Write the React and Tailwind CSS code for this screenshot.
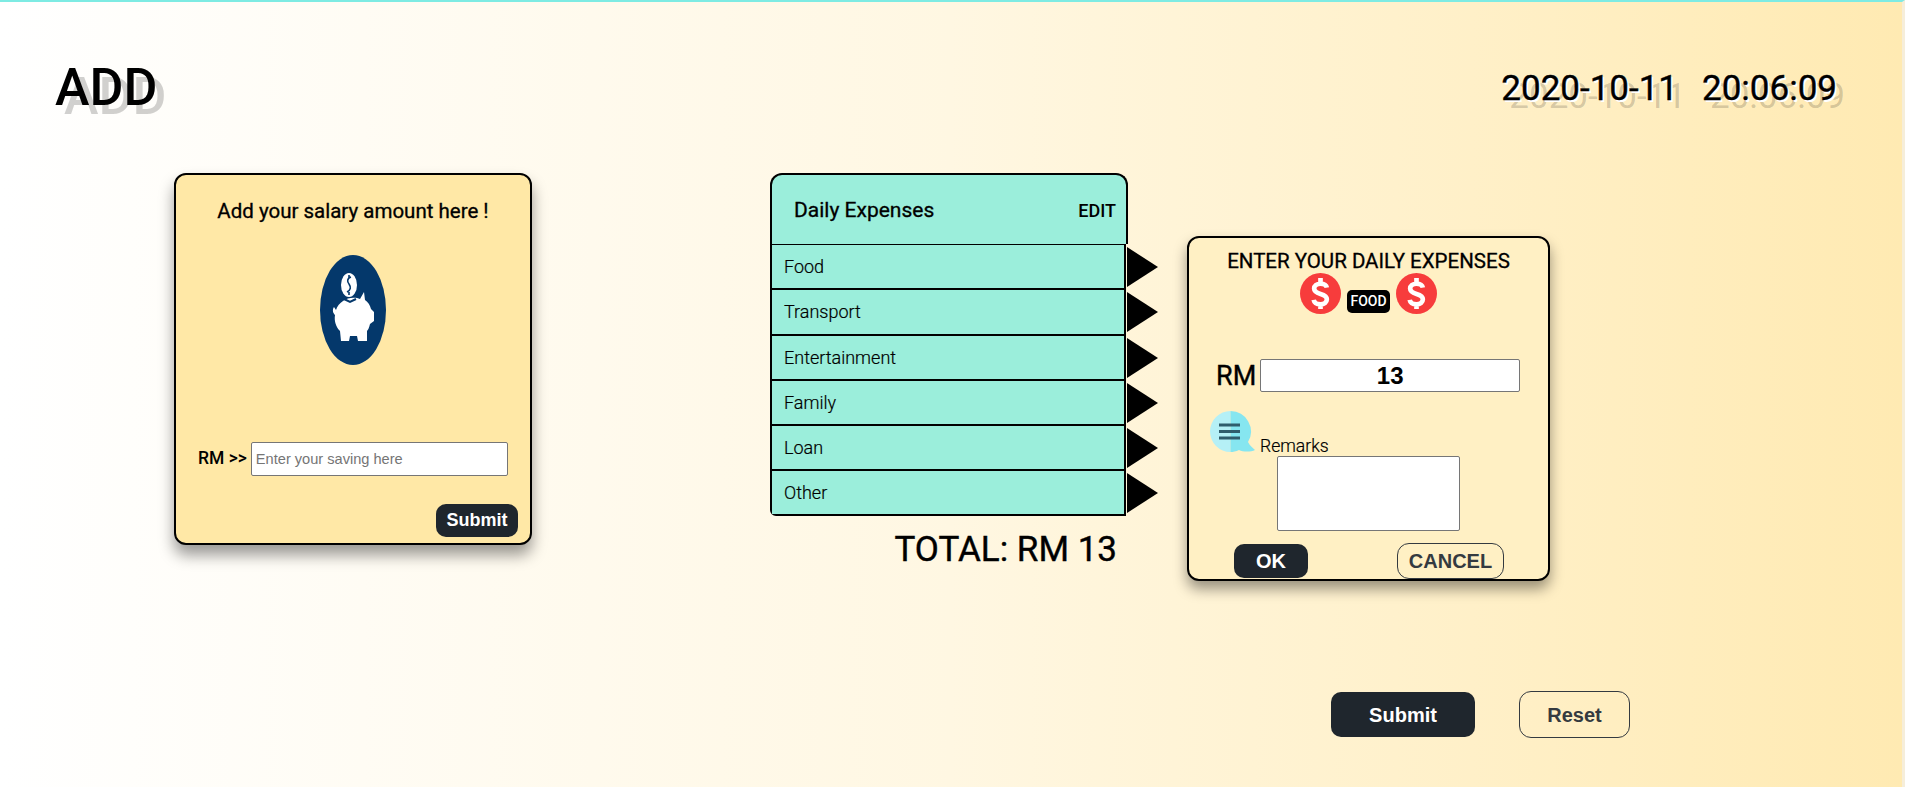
import React from "react";

const CATEGORIES = ["Food", "Transport", "Entertainment", "Family", "Loan", "Other"];

function PiggyIcon() {
  return (
    <svg width="66" height="110" viewBox="0 0 66 110" className="block">
      <ellipse cx="33" cy="55" rx="33" ry="55" fill="#04386b" />
      <ellipse cx="29" cy="30" rx="8" ry="12" fill="#fff" />
      <path d="M31 22 C27 23 27 27 29 29 C31 32 31 35 27 37 M29 20 V23 M29 37 V40" fill="none" stroke="#04386b" strokeWidth="1.6" />
      <path
        d="M23 46 C28 42 36 42 40 44 L44 37 L45 45 C48 47 50 50 51 54 L54 57 L54 66 L50 69 C49 73 48 75 47 76 L47 86 L38 86 L37 81 L30 81 L29 86 L21 86 L20 76 C16 72 14 66 15 60 C13 58 12 55 14 52 L16 55 C17 51 20 48 23 46 Z"
        fill="#fff"
      />
      <path d="M24 44 L30 47 L36 44" fill="none" stroke="#04386b" strokeWidth="2" />
    </svg>
  );
}

function CoinIcon() {
  return (
    <svg width="41" height="41" viewBox="0 0 42 42" className="block">
      <circle cx="21" cy="21" r="21" fill="#f73c3c" />
      <path
        d="M27.500 15 C27 12.500 24.500 11 21 11 C17 11 14.500 13 14.500 16 C14.500 19.500 17.500 20.500 21 21.500 C24.500 22.500 27.500 23.500 27.500 27 C27.500 30 25 32 21 32 C17 32 14.500 30 14 27.500 M21 5 V11 M21 32 V37"
        fill="none"
        stroke="#fff"
        strokeWidth="4.800"
      />
    </svg>
  );
}

function BubbleIcon() {
  return (
    <svg width="46" height="42" viewBox="0 0 46 42" className="block">
      <path d="M20.500 0 A20.500 20.500 0 0 0 20.500 41 Z" fill="#b5f0f6" />
      <path d="M20.500 0 A20.500 20.500 0 0 1 38 31 C40 35 43 37 45 39 C41 41 33 41 29 39 C26 40.500 23 41 20.500 41 Z" fill="#86e6f0" />
      <path d="M9 14 H30 M9 20.500 H30 M9 27 H30" stroke="#2f5d6c" strokeWidth="3" />
    </svg>
  );
}

export default function App() {
  return (
    <div className="h-[787px] overflow-hidden border-t-2 border-r-[3px] border-t-[#7eebe3] border-r-[#f6eeda] bg-linear-to-r from-white via-[#fff7e2] to-[#ffeab2] font-[Roboto,sans-serif] text-black">
      {/* Header */}
      <div className="flex h-[171px] items-center justify-between pl-[55px] pr-[65px]">
        <h1 className="text-[52px] font-medium [text-shadow:9px_9px_0_rgba(0,0,0,0.18)]">ADD</h1>
        <div className="mt-[4px] flex gap-[24px] text-[35px] [-webkit-text-stroke:0.4px_black] [text-shadow:2px_2px_0_#fff,8px_8px_0_rgba(0,0,0,0.18)]">
          <span>2020-10-11</span>
          <span>20:06:09</span>
        </div>
      </div>

      <div className="flex items-start pl-[174px]">
        {/* Salary card */}
        <div className="h-[372px] w-[358px] rounded-xl border-2 border-black bg-[#ffe8a6] shadow-[0_10px_15px_rgba(0,0,0,0.4)]">
          <p className="mt-[24px] text-center text-[20.500px] leading-[24px] [-webkit-text-stroke:0.3px_black]">Add your salary amount here !</p>
          <div className="mt-[32px] flex justify-center">
            <PiggyIcon />
          </div>
          <div className="mt-[77px] flex items-center pl-[22px]">
            <span className="mb-[2px] mr-[4px] text-[17.500px] font-medium">RM &gt;&gt;</span>
            <input
              type="text"
              placeholder="Enter your saving here"
              className="h-[34px] w-[257px] rounded-[2px] border border-[#767676] bg-white px-[4px] font-['Liberation_Sans',Arial,sans-serif] text-[14.600px] placeholder:text-[#757575]"
            />
          </div>
          <div className="mt-[28px] flex justify-end pr-[12px]">
            <button className="h-[33px] w-[82px] rounded-[10px] bg-[#1f262d] font-['Liberation_Sans',Arial,sans-serif] text-[18px] font-bold text-white">
              Submit
            </button>
          </div>
        </div>

        {/* Expense list */}
        <div className="ml-[238px] w-[358px]">
          <div className="flex h-[71px] items-center justify-between rounded-t-xl border-x-2 border-t-2 border-black bg-[#9beedb] pl-[22px] pr-[10px] pt-[2px]">
            <span className="text-[21px] [-webkit-text-stroke:0.3px_black]">Daily Expenses</span>
            <span className="text-[18px] font-medium">EDIT</span>
          </div>
          <div className="mr-[2px] rounded-bl-md border-x-2 border-b-2 border-t border-black">
            {CATEGORIES.map((name, i) => (
              <div
                key={name}
                className={`relative flex items-center bg-[#9beedb] pl-[12px] text-[18px] font-light [-webkit-text-stroke:0.2px_black] ${
                  i < 5 ? "h-[45.300px] border-b-2 border-black" : "h-[42.500px]"
                }`}
              >
                {name}
                <span className="absolute right-[-34px] top-[2px] h-0 w-0 border-y-[20px] border-l-[31px] border-y-transparent border-l-black" />
              </div>
            ))}
          </div>
          <div className="mt-[13px] pr-[11px] text-right text-[35px] leading-[42px] [-webkit-text-stroke:0.4px_black]">TOTAL: RM 13</div>
        </div>

        {/* Entry dialog */}
        <div className="ml-[59px] mt-[63px] h-[345px] w-[363px] rounded-xl border-2 border-black bg-[#fff0c4] shadow-[0_8px_14px_rgba(0,0,0,0.4)]">
          <p className="mt-[11px] text-center text-[20.500px] leading-[24px] [-webkit-text-stroke:0.3px_black]">ENTER YOUR DAILY EXPENSES</p>
          <div className="flex items-start justify-center gap-[6px]">
            <CoinIcon />
            <span className="mt-[17px] flex h-[23px] w-[43px] items-center justify-center rounded-[5px] bg-black text-[14px] font-medium text-white">
              FOOD
            </span>
            <CoinIcon />
          </div>
          <div className="mt-[45px] flex items-center pl-[27px]">
            <span className="mr-[4px] text-[27px] leading-[32px] [-webkit-text-stroke:0.4px_black]">RM</span>
            <input
              type="text"
              readOnly
              value="13"
              className="h-[33px] w-[260px] rounded-[2px] border border-[#767676] bg-white text-center font-['Liberation_Sans',Arial,sans-serif] text-[24px] font-bold"
            />
          </div>
          <div className="mt-[19px] flex items-end pl-[21px]">
            <div className="mb-[3px]">
              <BubbleIcon />
            </div>
            <span className="ml-[4px] text-[17.600px] font-light leading-[19px] [-webkit-text-stroke:0.2px_black]">Remarks</span>
          </div>
          <textarea className="mx-auto block h-[75px] w-[183px] resize-none rounded-[2px] border border-[#767676] bg-white" />
          <div className="mt-[12px] flex items-center pl-[45px]">
            <button className="h-[34px] w-[74px] rounded-[10px] bg-[#1f262d] font-['Liberation_Sans',Arial,sans-serif] text-[20px] font-bold text-white">
              OK
            </button>
            <button className="ml-[89px] h-[36px] w-[107px] rounded-[12px] border border-[#343a40] font-['Liberation_Sans',Arial,sans-serif] text-[20px] font-bold text-[#343a40]">
              CANCEL
            </button>
          </div>
        </div>
      </div>

      {/* Page actions */}
      <div className="mt-[110px] flex items-center justify-end gap-[44px] pr-[272px]">
        <button className="h-[45px] w-[144px] rounded-[10px] bg-[#1f262d] font-['Liberation_Sans',Arial,sans-serif] text-[20px] font-bold text-white">
          Submit
        </button>
        <button className="h-[47px] w-[111px] rounded-[12px] border border-[#343a40] font-['Liberation_Sans',Arial,sans-serif] text-[20px] font-bold text-[#343a40]">
          Reset
        </button>
      </div>
    </div>
  );
}
